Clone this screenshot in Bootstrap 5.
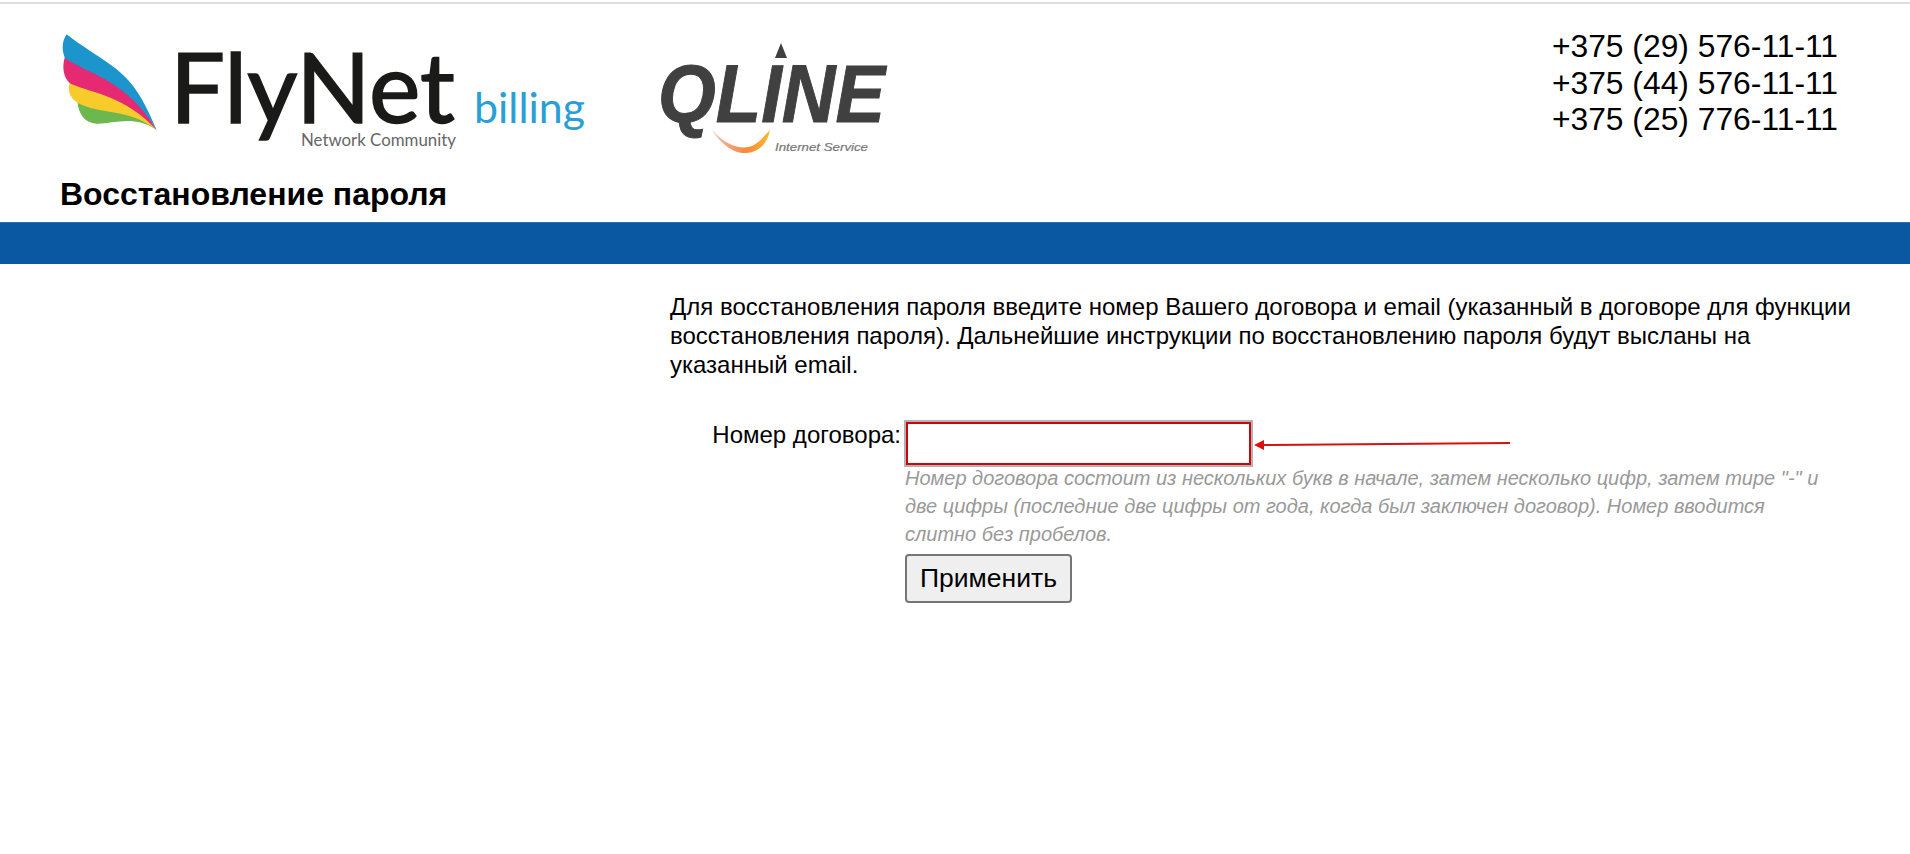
<!DOCTYPE html>
<html lang="ru">
<head>
    <title>Восстановление пароля</title>
    <meta charset="UTF-8">
    <meta name="viewport" content="width=device-width, initial-scale=1.0">
    <link href="https://cdn.jsdelivr.net/npm/bootstrap@5.3.0/dist/css/bootstrap.min.css" rel="stylesheet">
    <style>
        body { font-family: "Liberation Sans", Arial, sans-serif; color: #000; background: #fff; }
        .top-line { height: 2px; margin-top: 2px; background: #ddd; }
        .head-area { padding: 24px 72px 0 60px; height: 157px; }
        .logo-one { width: 530px; height: 130px; display: block; overflow: visible; }
        .logo-two { width: 240px; height: 130px; display: block; margin-left: 60px; overflow: visible; }
        .phones { font-size: 31.8px; line-height: 36.5px; }
        .page-title { font-size: 32px; font-weight: 700; line-height: 34px; margin: 0; padding: 16px 0 0 60px; height: 61px; }
        .blue-bar { height: 42px; background: #0b58a2; border-top: 1px solid #2a70b0; }
        .content-box { margin: 28px 50px 0 670px; }
        .intro-text { font-size: 24px; line-height: 29px; margin: 0 0 42px; width: 1190px; }
        .label-col { width: 235px; font-size: 24px; line-height: 28px; text-align: right; padding-right: 4px; }
        .field-col { width: 920px; }
        .num-input { width: 347px; height: 45px; border: 3px solid #d60000; outline: 2px solid #b0b4b8; outline-offset: -1px; background: #fff; border-radius: 0; padding: 0 4px; }
        .hint-text { color: #999; font-style: italic; font-size: 20px; line-height: 28px; margin: -2px 0 6px; }
        .apply-btn { width: 167px; height: 49px; font-size: 26.5px; line-height: 1; color: #000; background: #efefef; border: 2px solid #767676; border-radius: 4px; padding: 0; }
    </style>
</head>
<body>
    <div class="top-line"></div>
    <div class="head-area d-flex justify-content-between">
        <div class="d-flex">
            <svg class="logo-one" viewBox="60 28 530 130">
                <g transform="translate(50 25) scale(.3333)">
                    <path fill="#6cb84f" d="M82 225C84 268 105 294 140 296C190 298 250 268 320 315L250 240Z"/>
                    <path fill="#f7cb2a" d="M60 170C50 200 62 222 88 236C150 268 240 250 320 315L240 215Z"/>
                    <path fill="#e52a73" d="M45 95C35 125 40 160 62 176C130 205 230 215 320 315L230 170Z"/>
                    <path fill="#1b95cb" d="M50 28C35 50 35 75 45 100C120 150 230 165 320 315C280 220 250 170 190 125C140 90 90 60 50 28Z"/>
                </g>
                <text x="170" y="123" font-family="Lato, sans-serif" font-size="97" fill="#1a1a18" stroke="#1a1a18" stroke-width="1.6" textLength="285" lengthAdjust="spacingAndGlyphs">FlyNet</text>
                <text x="301" y="146" font-family="Lato, sans-serif" font-size="17" fill="#666" textLength="155" lengthAdjust="spacingAndGlyphs">Network Community</text>
                <text x="474" y="123" font-family="Lato, sans-serif" font-size="43" fill="#2a9fd6" textLength="111" lengthAdjust="spacingAndGlyphs">billing</text>
            </svg>
            <svg class="logo-two" viewBox="650 28 240 130">
                <defs>
                    <linearGradient id="swoosh" x1="0" x2="1" y1="0" y2="0">
                        <stop offset="0" stop-color="#f6b8b0"/>
                        <stop offset=".6" stop-color="#f58a3c"/>
                        <stop offset="1" stop-color="#fbb82a"/>
                    </linearGradient>
                </defs>
                <text x="658" y="122" font-family="Liberation Sans, sans-serif" font-weight="700" font-style="italic" font-size="81" fill="#404040" stroke="#404040" stroke-width="1" textLength="227" lengthAdjust="spacingAndGlyphs">QLINE</text>
                <path fill="#404040" d="M781 43L775 58H787Z"/>
                <path fill="url(#swoosh)" d="M712 130C726 146 742 150 752 146C760 142 764 136 770 130C768 142 760 152 746 153C732 154 720 142 712 130Z"/>
                <text x="775" y="151" font-family="Liberation Sans, sans-serif" font-style="italic" font-size="11.5" fill="#777" stroke="#777" stroke-width=".2" textLength="93" lengthAdjust="spacingAndGlyphs">Internet Service</text>
            </svg>
        </div>
        <div class="phones">
            <div>+375 (29) 576-11-11</div>
            <div>+375 (44) 576-11-11</div>
            <div>+375 (25) 776-11-11</div>
        </div>
    </div>
    <h1 class="page-title">Восстановление пароля</h1>
    <div class="blue-bar"></div>
    <div class="content-box">
        <p class="intro-text">Для восстановления пароля введите номер Вашего договора и email (указанный в договоре для функции восстановления пароля). Дальнейшие инструкции по восстановлению пароля будут высланы на указанный email.</p>
        <form class="d-flex">
            <label class="label-col" for="contractNum">Номер договора:</label>
            <div class="field-col">
                <div class="d-flex align-items-center">
                    <input type="text" id="contractNum" class="num-input">
                    <svg width="258" height="12" viewBox="0 0 258 12">
                        <path fill="#d81010" d="M2 7L12 2V6L258 4V6L12 8V12Z"/>
                    </svg>
                </div>
                <p class="hint-text">Номер договора состоит из нескольких букв в начале, затем несколько цифр, затем тире "-" и две цифры (последние две цифры от года, когда был заключен договор). Номер вводится слитно без пробелов.</p>
                <button type="button" class="apply-btn">Применить</button>
            </div>
        </form>
    </div>
</body>
</html>
